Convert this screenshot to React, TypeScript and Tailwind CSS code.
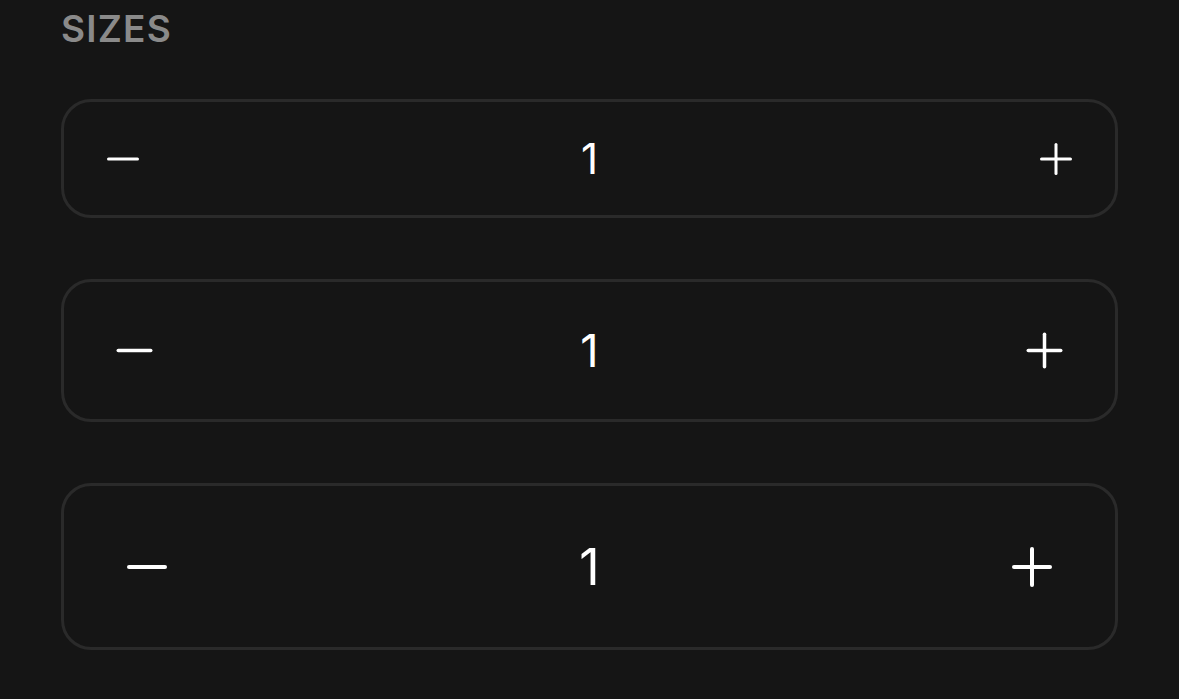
import React from 'react';

type Size = 'sm' | 'md' | 'lg';

const sizeClasses: Record<Size, { box: string; pad: string; icon: number; stroke: number; text: string }> = {
  sm: { box: 'h-[119px]', pad: 'px-[39px]', icon: 40, stroke: 3, text: 'text-[42px]' },
  md: { box: 'h-[143px]', pad: 'px-[48px]', icon: 45, stroke: 3.5, text: 'text-[45px]' },
  lg: { box: 'h-[167px]', pad: 'px-[58px]', icon: 50, stroke: 4, text: 'text-[50px]' },
};

const MinusIcon: React.FC<{ size: number; stroke: number }> = ({ size, stroke }) => (
  <svg width={size} height={size} viewBox={`0 0 ${size} ${size}`} fill="none">
    <line
      x1={size * 0.1 + stroke / 2}
      y1={size / 2}
      x2={size * 0.9 - stroke / 2}
      y2={size / 2}
      stroke="white"
      strokeWidth={stroke}
      strokeLinecap="round"
    />
  </svg>
);

const PlusIcon: React.FC<{ size: number; stroke: number }> = ({ size, stroke }) => (
  <svg width={size} height={size} viewBox={`0 0 ${size} ${size}`} fill="none">
    <line x1={size * 0.1 + stroke / 2} y1={size / 2} x2={size * 0.9 - stroke / 2} y2={size / 2} stroke="white" strokeWidth={stroke} strokeLinecap="round" />
    <line x1={size / 2} y1={size * 0.1 + stroke / 2} x2={size / 2} y2={size * 0.9 - stroke / 2} stroke="white" strokeWidth={stroke} strokeLinecap="round" />
  </svg>
);

const Stepper: React.FC<{ size: Size; value: number }> = ({ size, value }) => {
  const s = sizeClasses[size];
  return (
    <div className={`flex items-center justify-between w-full rounded-[30px] border-[3px] border-[#2a2a2a] ${s.box} ${s.pad}`}>
      <button className="flex items-center justify-center">
        <MinusIcon size={s.icon} stroke={s.stroke} />
      </button>
      <span className={`text-white font-normal leading-none ${s.text}`}>{value}</span>
      <button className="flex items-center justify-center">
        <PlusIcon size={s.icon} stroke={s.stroke} />
      </button>
    </div>
  );
};

export default function App() {
  return (
    <div className="min-h-screen w-full bg-[#151515] px-[61px] pt-[6px]" style={{ fontFamily: 'Inter, "Noto Sans", sans-serif' }}>
      <h2 className="text-[37px] font-semibold tracking-[1.2px] text-[#8a8a8a] leading-[45px]">SIZES</h2>
      <div className="mt-[48px] flex flex-col gap-[61px]">
        <Stepper size="sm" value={1} />
        <Stepper size="md" value={1} />
        <Stepper size="lg" value={1} />
      </div>
    </div>
  );
}
